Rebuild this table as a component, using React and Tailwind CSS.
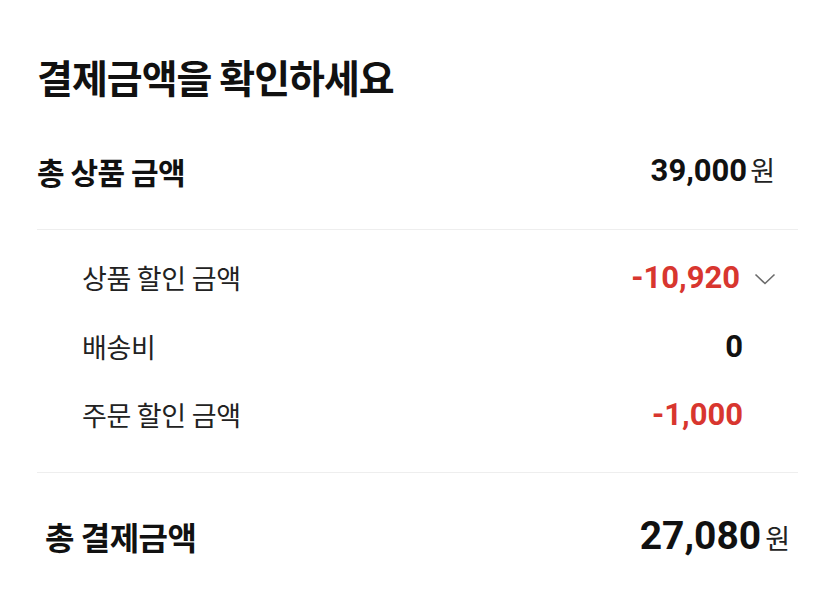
import React from 'react';

// Payment summary card: totals, discount breakdown and final amount
const kr = "font-['Noto_Sans_CJK_KR',sans-serif]";
const num = "font-['Roboto','Noto_Sans_CJK_KR',sans-serif]";

function Chevron() {
    return (
        <svg width="22" height="12" viewBox="0 0 22 12" fill="none" className="block">
            <path d="M1.5 1.5 L11 10.5 L20.5 1.5" stroke="#6b6b6b" strokeWidth="1.6" />
        </svg>
    );
}

function SubRow({ label, amount, red, expandable, height }) {
    return (
        <div className={`flex items-center justify-between pl-[45px] ${expandable ? 'pr-[22px]' : 'pr-[55px]'} ${height}`}>
            <span className={`${kr} text-[27px] text-[#222] tracking-[-0.3px]`}>{label}</span>
            <div className="flex items-center">
                <span className={`${num} text-[31px] font-bold ${red ? 'text-[#d8362f]' : 'text-[#111]'}`}>
                    {amount}
                </span>
                {expandable && (
                    <span className="ml-[14px] mt-[2px]"><Chevron /></span>
                )}
            </div>
        </div>
    );
}

export default function App() {
    return (
        <div className={`w-[835px] h-[605px] bg-white text-[#111] ${kr}`}>
            <div className="pt-[47px] px-[37px]">
                <div className="h-[58px] flex items-center">
                    <h1 className={`${kr} text-[39px] font-bold tracking-[-1px]`}>결제금액을 확인하세요</h1>
                </div>

                <div className="mt-[37px] h-[58px] flex items-center justify-between pr-[23px]">
                    <span className="text-[30px] font-bold tracking-[-0.5px]">총 상품 금액</span>
                    <div className="flex items-baseline">
                        <span className={`${num} text-[31px] font-bold`}>39,000</span>
                        <span className="ml-[3px] text-[27px] text-[#222]">원</span>
                    </div>
                </div>

                <div className="mt-[29px] h-px bg-[#eeeeee]" />

                <div className="pt-[13px]">
                    <SubRow label="상품 할인 금액" amount="-10,920" red expandable height="h-[70px]" />
                    <SubRow label="배송비" amount="0" height="h-[68px]" />
                    <SubRow label="주문 할인 금액" amount="-1,000" red height="h-[68px]" />
                </div>

                <div className="mt-[23px] h-px bg-[#eeeeee]" />

                <div className="h-[126px] flex items-center justify-between pl-[8px] pr-[8px]">
                    <span className="text-[32px] font-bold tracking-[-0.5px]">총 결제금액</span>
                    <div className="flex items-baseline">
                        <span className={`${num} text-[39px] font-bold`}>27,080</span>
                        <span className="ml-[4px] text-[27px] text-[#222]">원</span>
                    </div>
                </div>
            </div>
        </div>
    );
}
